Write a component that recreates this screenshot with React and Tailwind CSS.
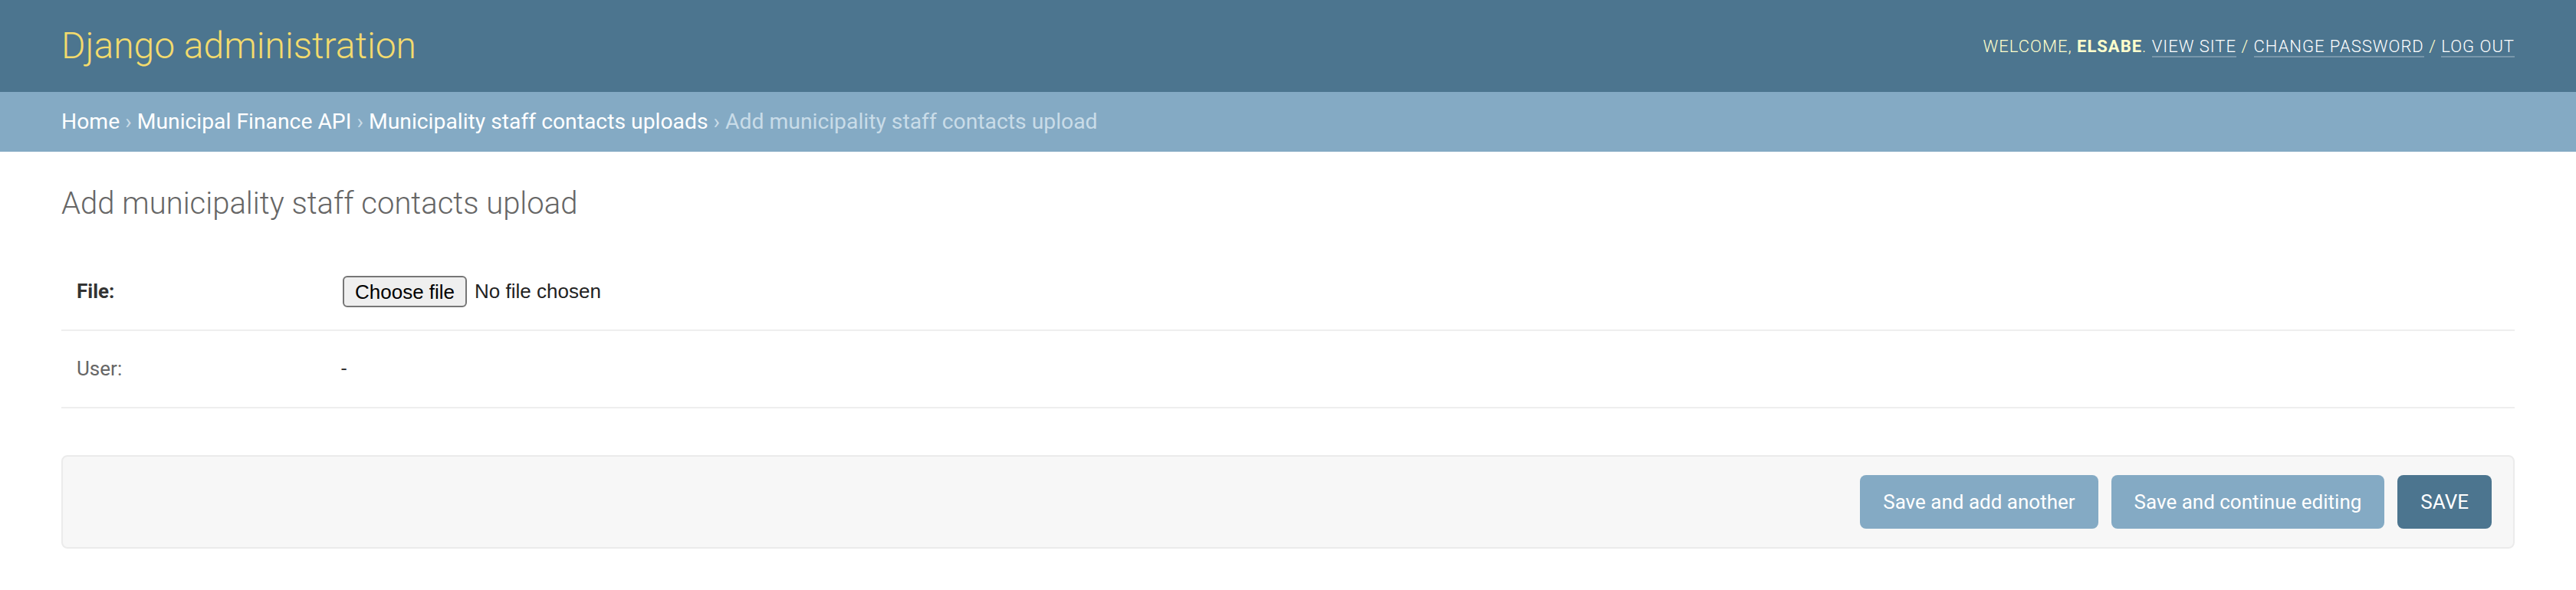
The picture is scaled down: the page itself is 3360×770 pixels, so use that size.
export default function App() {
  const crumbs = ['Home', 'Municipal Finance API', 'Municipality staff contacts uploads'];

  return (
    <div className="min-h-[770px] bg-white font-['Roboto','Lucida_Grande',sans-serif] text-[#333]">
      <div className="flex h-[120px] items-center justify-between bg-[#4c758f] px-[80px]">
        <h1 className="text-[48px] font-light text-[#f3db6d]">Django administration</h1>
        <div className="text-[22px] font-light uppercase tracking-[1px] text-[#ffffcc]">
          Welcome, <strong className="font-bold">Elsabe</strong>.{' '}
          <a className="border-b-2 border-white/25 text-white">View site</a> /{' '}
          <a className="border-b-2 border-white/25 text-white">Change password</a> /{' '}
          <a className="border-b-2 border-white/25 text-white">Log out</a>
        </div>
      </div>

      <div className="flex h-[78px] items-center bg-[#84aac4] px-[80px] text-[28.3px] text-[#c9dce8]">
        <div>
          {crumbs.map((c) => (
            <span key={c}>
              <a className="text-white">{c}</a> ›{' '}
            </span>
          ))}
          Add municipality staff contacts upload
        </div>
      </div>

      <div className="px-[80px] pt-[38px]">
        <h1 className="mb-[35px] text-[40px] font-light text-[#666]">Add municipality staff contacts upload</h1>

        <div className="flex h-[101px] items-center border-b-2 border-[#eee] px-[20px] text-[26px]">
          <label className="w-[347px] font-bold text-[#333]">File:</label>
          <div className="flex items-center font-['Liberation_Sans',Arial,sans-serif] text-[26px]">
            <button className="h-[41px] rounded-[6px] border-2 border-[#767676] bg-[#efefef] px-[14px] text-black">
              Choose file
            </button>
            <span className="ml-[10px] text-[#222]">No file chosen</span>
          </div>
        </div>

        <div className="flex h-[101px] items-center border-b-2 border-[#eee] px-[20px] text-[26px]">
          <label className="w-[345px] text-[#666]">User:</label>
          <div className="text-[#333]">-</div>
        </div>

        <div className="mt-[61px] flex justify-end gap-[17px] rounded-[8px] border-2 border-[#ebebeb] bg-[#f7f7f7] px-[28px] py-[24px]">
          <button className="h-[70px] rounded-[8px] bg-[#84aac4] px-[30px] text-[26px] text-white">Save and add another</button>
          <button className="h-[70px] rounded-[8px] bg-[#84aac4] px-[30px] text-[26px] text-white">Save and continue editing</button>
          <button className="h-[70px] rounded-[8px] bg-[#4c758f] px-[30px] text-[26px] uppercase text-white">Save</button>
        </div>
      </div>
    </div>
  );
}
